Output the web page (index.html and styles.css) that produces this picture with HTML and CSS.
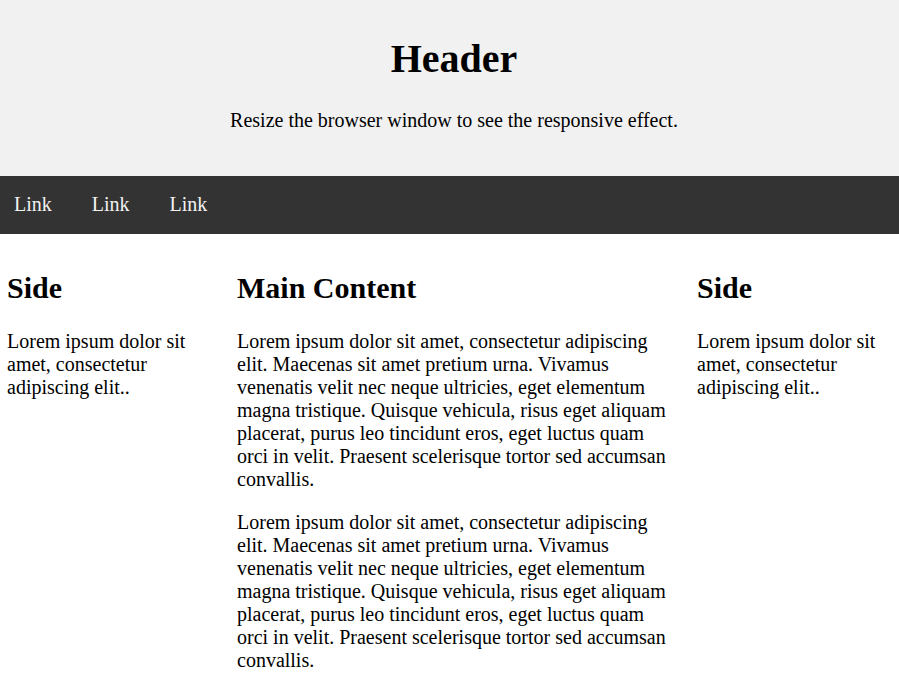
FILE: index.html
```html
<!DOCTYPE html>
<html>
<head>
<meta charset="utf-8">
<title>Layout</title>
<link rel="stylesheet" href="styles.css">
</head>
<body>
<div class="header">
  <h1>Header</h1>
  <p>Resize the browser window to see the responsive effect.</p>
</div>
<div class="topnav">
  <a href="#">Link</a>
  <a href="#">Link</a>
  <a href="#">Link</a>
</div>
<div class="row">
  <div class="column side">
    <h2>Side</h2>
    <p>Lorem ipsum dolor sit amet, consectetur adipiscing elit..</p>
  </div>
  <div class="column middle">
    <h2>Main Content</h2>
    <p>Lorem ipsum dolor sit amet, consectetur adipiscing elit. Maecenas sit amet pretium urna. Vivamus venenatis velit nec neque ultricies, eget elementum magna tristique. Quisque vehicula, risus eget aliquam placerat, purus leo tincidunt eros, eget luctus quam orci in velit. Praesent scelerisque tortor sed accumsan convallis.</p>
    <p>Lorem ipsum dolor sit amet, consectetur adipiscing elit. Maecenas sit amet pretium urna. Vivamus venenatis velit nec neque ultricies, eget elementum magna tristique. Quisque vehicula, risus eget aliquam placerat, purus leo tincidunt eros, eget luctus quam orci in velit. Praesent scelerisque tortor sed accumsan convallis.</p>
  </div>
  <div class="column side">
    <h2>Side</h2>
    <p>Lorem ipsum dolor sit amet, consectetur adipiscing elit..</p>
  </div>
</div>
</body>
</html>
```
FILE: styles.css
```css
* { box-sizing: border-box; }
body {
  margin: 0;
  font-family: "Liberation Serif", "Times New Roman", serif;
  font-size: 20px;
  color: #000;
  background: #fff;
}
.header {
  background-color: #f1f1f1;
  padding: 8px 20px 44px 29px;
  text-align: center;
}
.header h1 {
  font-size: 40px;
  margin: 27px 0;
}
.header p {
  margin: 20px 0 0;
}
.topnav {
  background-color: #333;
  display: flex;
  padding: 0 0 0 14px;
}
.topnav a {
  color: #f2f2f2;
  text-decoration: none;
  padding: 17px 0 18px;
  margin-right: 40px;
  line-height: 23px;
}
.row {
  display: grid;
  grid-template-columns: 230px 460px 1fr;
}
.column {
  padding: 11px 12px 10px 7px;
}
.column h2 {
  font-size: 30px;
  margin: 26px 0 25px;
}
.column p {
  margin: 20px 0;
}
```
